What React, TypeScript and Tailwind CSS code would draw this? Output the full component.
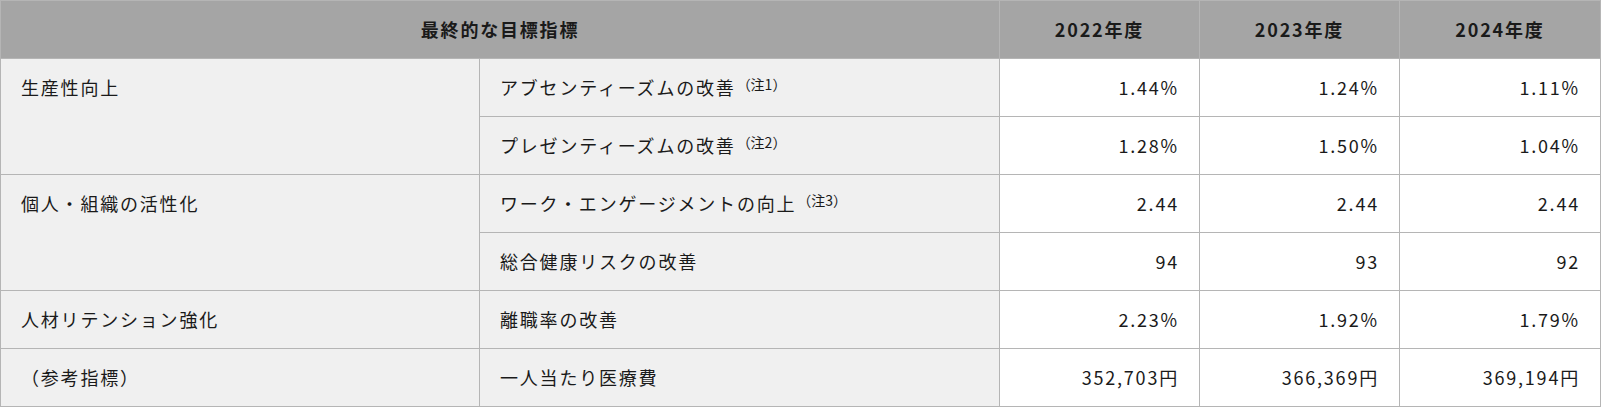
import React from 'react'

type Row = {
    group?: string
    span?: number
    label: string
    note?: string
    values: string[]
}

const rows: Row[] = [
    { group: '生産性向上', span: 2, label: 'アブセンティーズムの改善', note: '（注1）', values: ['1.44%', '1.24%', '1.11%'] },
    { label: 'プレゼンティーズムの改善', note: '（注2）', values: ['1.28%', '1.50%', '1.04%'] },
    { group: '個人・組織の活性化', span: 2, label: 'ワーク・エンゲージメントの向上', note: '（注3）', values: ['2.44', '2.44', '2.44'] },
    { label: '総合健康リスクの改善', values: ['94', '93', '92'] },
    { group: '人材リテンション強化', span: 1, label: '離職率の改善', values: ['2.23%', '1.92%', '1.79%'] },
    { group: '（参考指標）', span: 1, label: '一人当たり医療費', values: ['352,703円', '366,369円', '369,194円'] },
]

const years = ['2022年度', '2023年度', '2024年度']

export default function App() {
    return (
        <div className="w-[1601px] h-[408px] bg-white font-['Noto_Sans_CJK_JP','Noto_Sans',sans-serif] text-[18px] tracking-[0.1em] text-[#1a1a1a]">
            <table className="w-[1600px] border-collapse table-fixed">
                <colgroup>
                    <col className="w-[479px]" />
                    <col className="w-[520px]" />
                    <col className="w-[200px]" />
                    <col className="w-[200px]" />
                    <col className="w-[201px]" />
                </colgroup>
                <thead>
                    <tr className="bg-[#a5a5a5]">
                        <th colSpan={2} className="border border-[#b5b5b5] py-[15px] leading-[27px] font-bold text-center">
                            最終的な目標指標
                        </th>
                        {years.map((y) => (
                            <th key={y} className="border border-[#b5b5b5] py-[15px] leading-[27px] font-bold text-center">
                                {y}
                            </th>
                        ))}
                    </tr>
                </thead>
                <tbody>
                    {rows.map((r) => (
                        <tr key={r.label}>
                            {r.group && (
                                <td
                                    rowSpan={r.span}
                                    className="border border-[#b5b5b5] bg-[#f0f0f0] px-5 py-[15px] leading-[27px] align-top text-left"
                                >
                                    {r.group}
                                </td>
                            )}
                            <td className="border border-[#b5b5b5] bg-[#f0f0f0] px-5 py-[15px] leading-[27px] align-middle text-left">
                                {r.label}
                                {r.note && (
                                    <span className="ml-[1px] text-[14px] tracking-normal align-[5px] leading-none">{r.note}</span>
                                )}
                            </td>
                            {r.values.map((v, i) => (
                                <td
                                    key={i}
                                    className="border border-[#b5b5b5] bg-white px-5 py-[15px] leading-[27px] text-right"
                                >
                                    {v}
                                </td>
                            ))}
                        </tr>
                    ))}
                </tbody>
            </table>
        </div>
    )
}
